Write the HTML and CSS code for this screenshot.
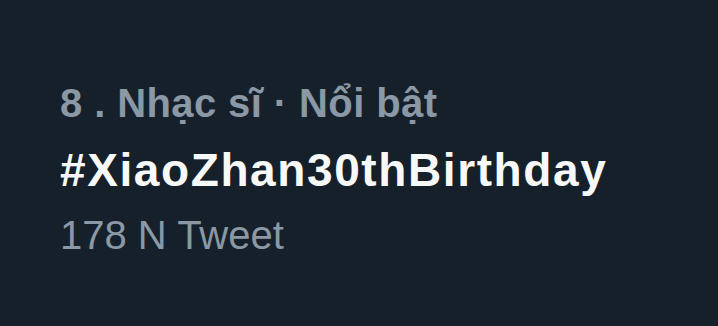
FILE: index.html
```html
<!DOCTYPE html>
<html lang="vi">
<head>
<meta charset="utf-8">
<link rel="stylesheet" href="styles.css">
</head>
<body>
<div class="trend">
  <div class="meta">8 . Nhạc sĩ · Nổi bật</div>
  <div class="tag">#XiaoZhan30thBirthday</div>
  <div class="count">178 N Tweet</div>
</div>
</body>
</html>
```
FILE: styles.css
```css
html, body {
  margin: 0;
  padding: 0;
  background: #16202b;
  width: 718px;
  height: 326px;
  overflow: hidden;
}
.trend {
  display: flex;
  flex-direction: column;
  padding: 79px 0 0 60px;
  font-family: "Liberation Sans", Arial, sans-serif;
}
.meta {
  font-size: 40px;
  line-height: 48px;
  font-weight: 700;
  letter-spacing: 0.4px;
  color: #8b98a5;
}
.tag {
  margin-top: 16px;
  font-size: 46px;
  line-height: 54px;
  font-weight: 700;
  letter-spacing: 1.6px;
  color: #f7f9f9;
}
.count {
  margin-top: 14px;
  font-size: 40px;
  line-height: 48px;
  font-weight: 400;
  color: #8b98a5;
}
```
